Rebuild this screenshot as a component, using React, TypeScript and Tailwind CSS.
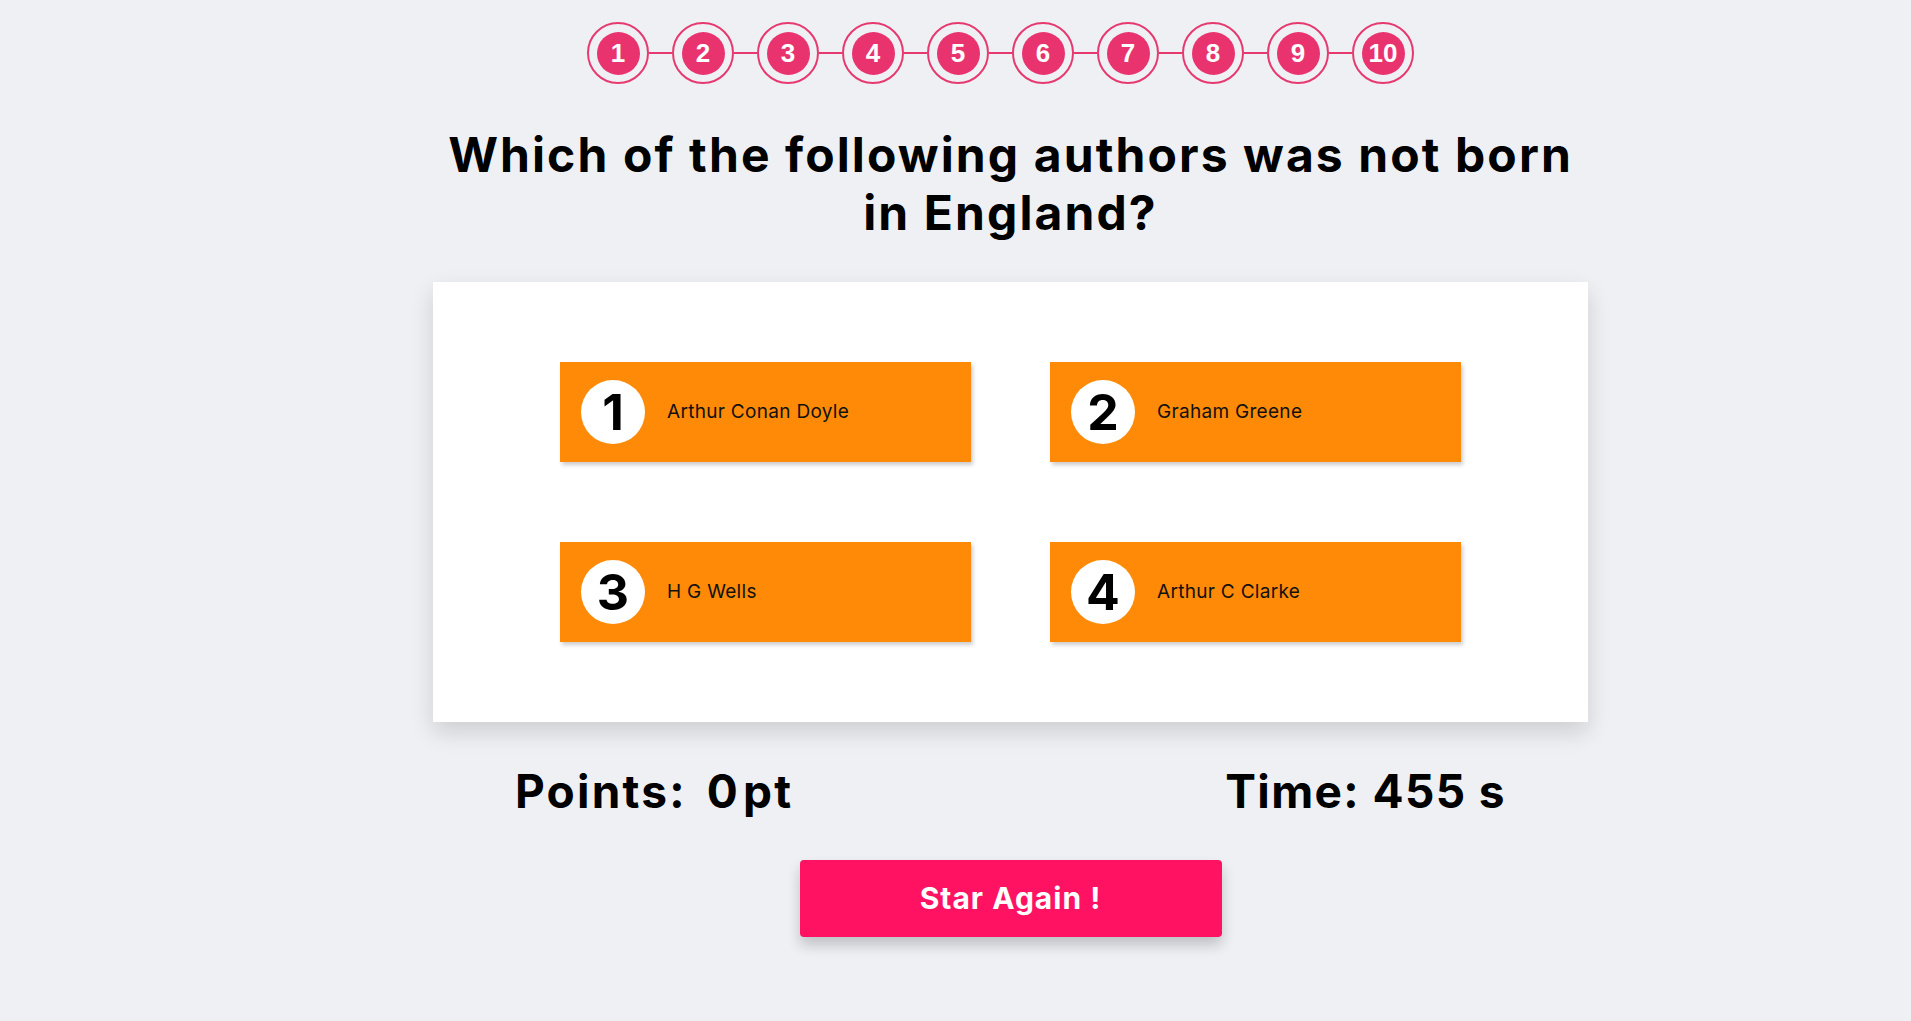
import React from 'react'

const answers = [
  { n: 1, text: 'Arthur Conan Doyle' },
  { n: 2, text: 'Graham Greene' },
  { n: 3, text: 'H G Wells' },
  { n: 4, text: 'Arthur C Clarke' },
]

const steps = [1, 2, 3, 4, 5, 6, 7, 8, 9, 10]

function Step({ n, last }: { n: number; last: boolean }) {
  return (
    <div className="flex items-center">
      <div className="w-[62px] h-[62px] rounded-full border-2 border-[#e6396f] flex items-center justify-center">
        <div className="w-[43px] h-[43px] rounded-full bg-[#e8336f] flex items-center justify-center text-white text-[26px] font-bold font-['Liberation_Sans',Arial,sans-serif] leading-none">
          {n}
        </div>
      </div>
      {!last && <div className="w-[23px] h-[2px] bg-[#e6396f]" />}
    </div>
  )
}

export default function App() {
  return (
    <main className="min-h-screen bg-[#eff0f4] font-['Inter',sans-serif] text-black">
      <div className="pl-[110px] pt-[22px] flex flex-col items-center">
        <div className="flex items-center mr-[20px]">
          {steps.map((s, i) => (
            <Step key={s} n={s} last={i === steps.length - 1} />
          ))}
        </div>

        <h1 className="mt-[42px] text-center text-[48px] leading-[57.6px] font-bold tracking-[2.1px]">
          Which of the following authors was not born
          <br />
          in England?
        </h1>

        <div className="mt-[41px] w-[1155px] h-[440px] bg-white shadow-[0_10px_22px_rgba(0,0,0,0.14)] grid grid-cols-[411px_411px] gap-x-[79px] gap-y-[80px] justify-center content-center">
          {answers.map(a => (
            <button
              key={a.n}
              className="h-[100px] bg-[#fe8a07] flex items-center pl-[21px] shadow-[2px_3px_4px_rgba(0,0,0,0.2)] text-left"
            >
              <span className="w-[64px] h-[64px] rounded-full bg-white flex items-center justify-center text-[50px] font-bold leading-none">
                {a.n}
              </span>
              <span className="ml-[22px] text-[19px] tracking-[0.3px] text-[#111]">{a.text}</span>
            </button>
          ))}
        </div>

        <div className="mt-[41px] w-[1155px] px-[82px] flex justify-between text-[46px] font-bold leading-[56px]">
          <div className="tracking-[2.2px]">
            Points:<span className="ml-[20px]">0</span>
            <span className="ml-[3px]">pt</span>
          </div>
          <div className="tracking-[1.4px]">Time: 455 s</div>
        </div>

        <button className="mt-[41px] w-[422px] h-[77px] rounded-[4px] bg-[#ff1262] text-white text-[30px] font-bold tracking-[1px] shadow-[0_8px_14px_rgba(0,0,0,0.2)]">
          Star Again !
        </button>
      </div>
    </main>
  )
}
